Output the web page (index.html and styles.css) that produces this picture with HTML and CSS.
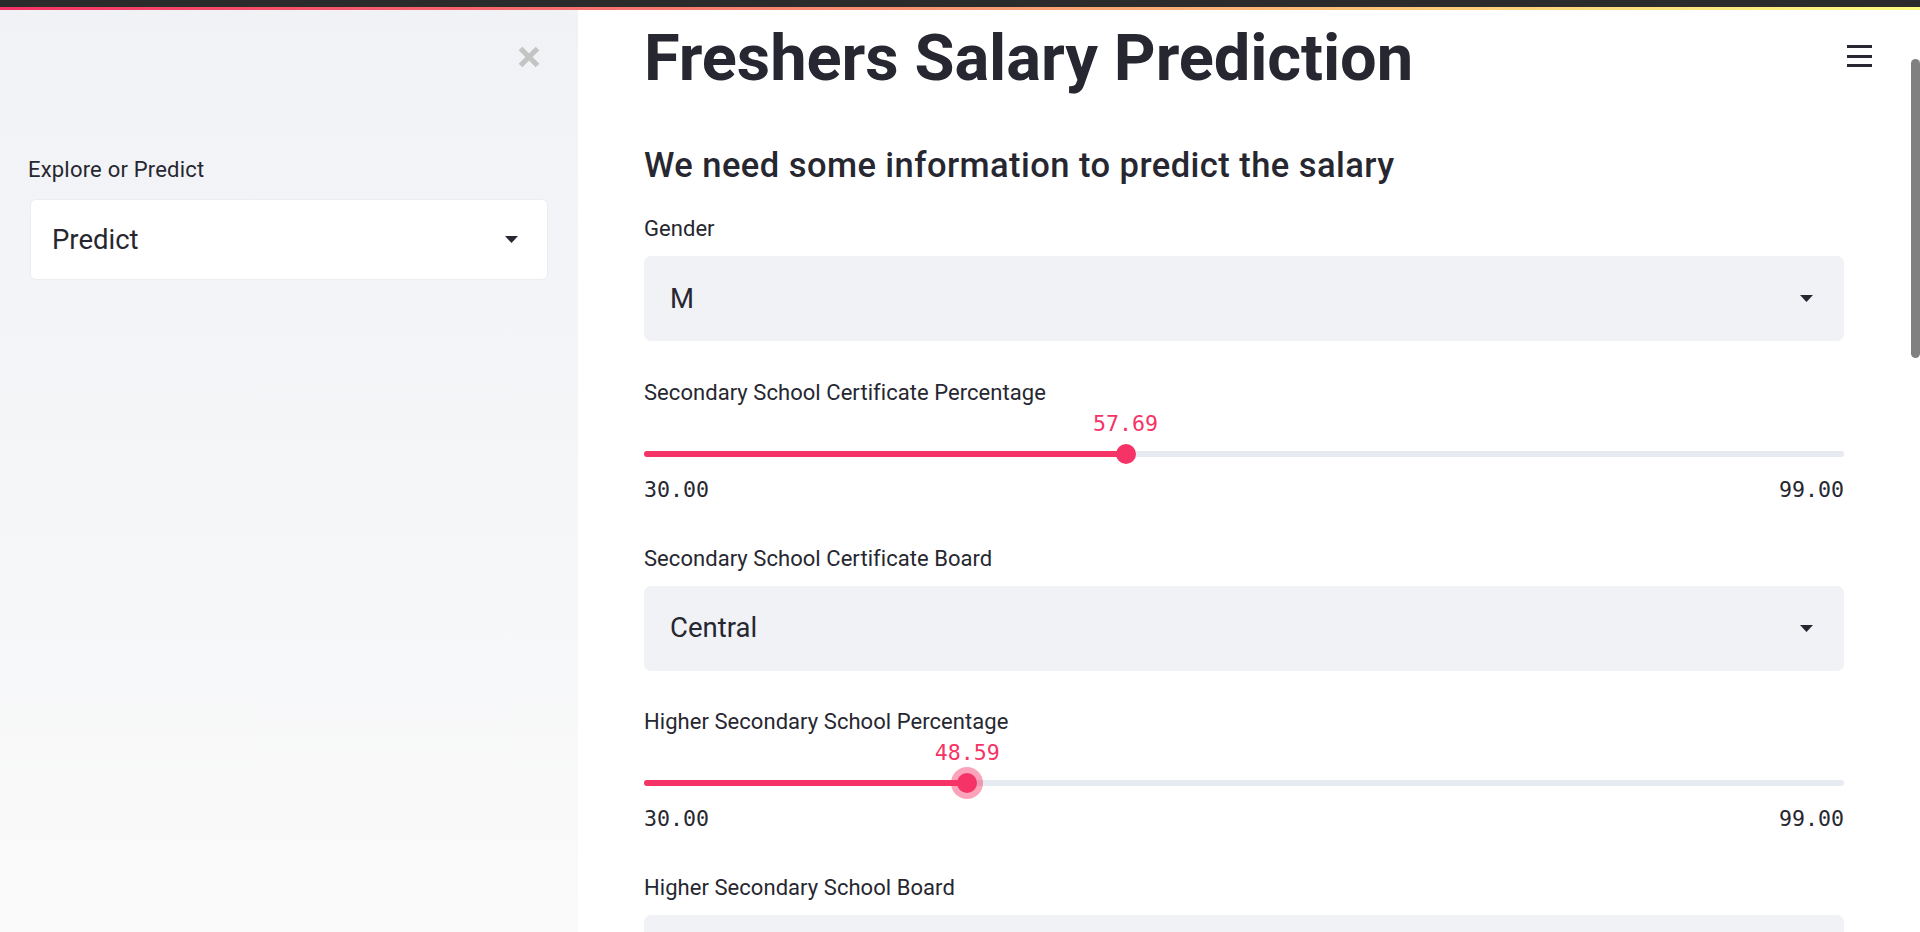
FILE: index.html
```html
<!DOCTYPE html>
<html lang="en">
<head>
<meta charset="utf-8">
<title>Freshers Salary Prediction</title>
<link rel="stylesheet" href="styles.css">
</head>
<body>
<div class="chrome"></div>
<div class="decoration"></div>
<div class="app">
  <aside class="sidebar">
    <div class="sidebar-head">
      <button class="close" aria-label="Close sidebar">
        <svg width="24" height="24" viewBox="0 0 24 24"><path d="M3.5 3.5 L20.5 20.5 M20.5 3.5 L3.5 20.5" stroke="#c4c4c4" stroke-width="5.2" stroke-linecap="butt" fill="none"/></svg>
      </button>
    </div>
    <div class="sb-label">Explore or Predict</div>
    <div class="select select-white">
      <span class="select-value">Predict</span>
      <svg class="caret" width="13" height="7" viewBox="0 0 13 7"><path d="M0 0 H13 L6.5 7 Z" fill="#262730"/></svg>
    </div>
  </aside>
  <main class="main">
    <h1 class="title">Freshers Salary Prediction</h1>
    <h3 class="subtitle">We need some information to predict the salary</h3>

    <div class="widget widget-first">
      <div class="label">Gender</div>
      <div class="select">
        <span class="select-value">M</span>
        <svg class="caret" width="13" height="7" viewBox="0 0 13 7"><path d="M0 0 H13 L6.5 7 Z" fill="#262730"/></svg>
      </div>
    </div>

    <div class="widget widget-slider">
      <div class="label">Secondary School Certificate Percentage</div>
      <div class="value-row"><span class="value-spacer" style="width:40.13%"></span><span class="value">57.69</span></div>
      <div class="track-area">
        <div class="track">
          <div class="fill" style="width:40.13%"></div>
          <div class="thumb" style="left:40.13%"></div>
        </div>
      </div>
      <div class="minmax"><span>30.00</span><span>99.00</span></div>
    </div>

    <div class="widget widget-after-slider">
      <div class="label">Secondary School Certificate Board</div>
      <div class="select">
        <span class="select-value">Central</span>
        <svg class="caret" width="13" height="7" viewBox="0 0 13 7"><path d="M0 0 H13 L6.5 7 Z" fill="#262730"/></svg>
      </div>
    </div>

    <div class="widget widget-slider">
      <div class="label">Higher Secondary School Percentage</div>
      <div class="value-row"><span class="value-spacer" style="width:26.94%"></span><span class="value">48.59</span></div>
      <div class="track-area">
        <div class="track">
          <div class="fill" style="width:26.94%"></div>
          <div class="thumb thumb-focus" style="left:26.94%"></div>
        </div>
      </div>
      <div class="minmax"><span>30.00</span><span>99.00</span></div>
    </div>

    <div class="widget widget-after-slider">
      <div class="label">Higher Secondary School Board</div>
      <div class="select"></div>
    </div>
  </main>
</div>
<button class="menu" aria-label="Menu"><span></span><span></span><span></span></button>
<div class="scrollbar"></div>
</body>
</html>
```
FILE: styles.css
```css
* { box-sizing: border-box; }
html, body { margin: 0; padding: 0; height: 100%; overflow: hidden; }
body {
  font-family: Roboto, "Liberation Sans", sans-serif;
  color: #262730;
  background: #ffffff;
  position: relative;
}
.chrome { height: 7px; background: #2b2b2b; }
.decoration { height: 3px; background: linear-gradient(90deg, #f63366, #fffd80); }
.app { display: flex; height: 922px; }

.sidebar {
  width: 578px;
  flex: 0 0 578px;
  background: linear-gradient(180deg, #f0f2f6 0%, #fafafa 100%);
  display: flex;
  flex-direction: column;
}
.sidebar-head { display: flex; justify-content: flex-end; padding: 35px 37px 0 0; }
.close {
  width: 24px; height: 24px; padding: 0; border: 0; background: transparent;
  display: flex; cursor: pointer;
}
.sb-label {
  margin: 87px 0 0 28px;
  font-size: 22px; line-height: 28px;
  letter-spacing: 0.2px;
}
.select {
  margin-top: 13px;
  height: 85px;
  background: #f0f2f6;
  border-radius: 7px;
  display: flex;
  align-items: center;
  justify-content: space-between;
  padding: 0 31px 0 26px;
}
.select-white {
  margin: 16px 0 0 31px;
  width: 516px;
  height: 79px;
  background: #ffffff;
  border-radius: 5px;
  box-shadow: 0 0 0 1px rgba(38, 39, 48, 0.03);
  padding: 0 29px 0 21px;
}
.select-value { font-size: 27.5px; line-height: 32px; }

.main { flex: 1; padding: 8px 0 0 66px; }
.title {
  margin: 0; width: 1200px;
  font-size: 65px; line-height: 80px; font-weight: 700;
  letter-spacing: -0.1px;
}
.subtitle {
  margin: 47px 0 0;
  font-size: 34.5px; line-height: 40px; font-weight: 500;
  letter-spacing: 0.45px;
}
.widget { width: 1200px; display: flex; flex-direction: column; }
.widget-first { margin-top: 30px; }
.widget-slider { margin-top: 37.5px; }
.widget-after-slider { margin-top: 42px; }
.label { font-size: 22px; line-height: 28px; color: #262730; letter-spacing: 0.05px; }

.value-row { display: flex; margin-top: 4px; height: 26px; }
.value-spacer { flex: 0 0 auto; }
.value {
  font-family: "DejaVu Sans Mono", "Liberation Mono", monospace;
  font-size: 21.6px; line-height: 26px; color: #f63366;
  transform: translateX(-50%);
  white-space: nowrap;
}
.track-area { margin-top: 7px; height: 20px; display: flex; align-items: center; }
.track {
  position: relative; width: 100%; height: 6px;
  background: #e6eaf1; border-radius: 3px;
}
.fill { height: 6px; background: #f63366; border-radius: 3px 0 0 3px; }
.thumb {
  position: absolute; top: 50%;
  width: 20px; height: 20px; border-radius: 50%;
  background: #f63366;
  transform: translate(-50%, -50%);
}
.thumb-focus { box-shadow: 0 0 0 6px rgba(246, 51, 102, 0.45); }
.minmax {
  margin-top: 13px;
  display: flex; justify-content: space-between;
  font-family: "DejaVu Sans Mono", "Liberation Mono", monospace;
  font-size: 21.6px; line-height: 26px; color: #262730;
}

.menu {
  position: absolute; top: 45px; right: 48px;
  width: 25px; height: 22px; padding: 0; border: 0; background: transparent;
  display: flex; flex-direction: column; justify-content: space-between;
}
.menu span { display: block; height: 3px; background: #262730; }
.scrollbar {
  position: absolute; top: 59px; right: 0;
  width: 9px; height: 299px;
  background: #808080; border-radius: 5px;
}
```
